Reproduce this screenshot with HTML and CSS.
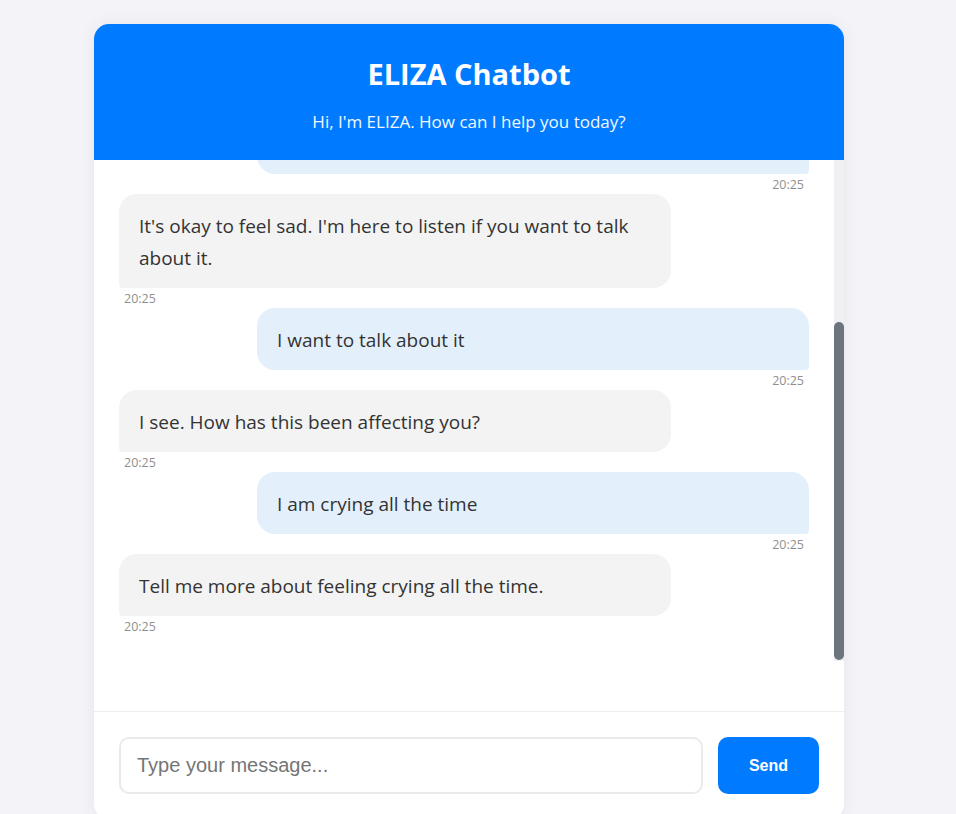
FILE: index.html
```html
<!DOCTYPE html>
<html lang="en">
<head>
<meta charset="utf-8">
<title>ELIZA Chatbot</title>
<link rel="stylesheet" href="styles.css">
</head>
<body>
<div class="chat">
  <header class="chat-header">
    <h1>ELIZA Chatbot</h1>
    <p>Hi, I'm ELIZA. How can I help you today?</p>
  </header>
  <div class="messages-wrap">
    <div class="messages">
      <div class="messages-inner">
        <div class="msg bot">
          <div class="bubble">Hello! How are you feeling today?</div>
          <div class="time">20:24</div>
        </div>
        <div class="msg user">
          <div class="bubble">Hi</div>
          <div class="time">20:24</div>
        </div>
        <div class="msg bot">
          <div class="bubble">How do you feel right now?</div>
          <div class="time">20:25</div>
        </div>
        <div class="msg user">
          <div class="bubble">I feel sad</div>
          <div class="time">20:25</div>
        </div>
        <div class="msg bot">
          <div class="bubble">It's okay to feel sad. I'm here to listen if you want to talk about it.</div>
          <div class="time">20:25</div>
        </div>
        <div class="msg user">
          <div class="bubble">I want to talk about it</div>
          <div class="time">20:25</div>
        </div>
        <div class="msg bot">
          <div class="bubble">I see. How has this been affecting you?</div>
          <div class="time">20:25</div>
        </div>
        <div class="msg user">
          <div class="bubble">I am crying all the time</div>
          <div class="time">20:25</div>
        </div>
        <div class="msg bot">
          <div class="bubble">Tell me more about feeling crying all the time.</div>
          <div class="time">20:25</div>
        </div>
      </div>
    </div>
    <div class="scrollbar"><div class="scrollbar-thumb"></div></div>
  </div>
  <div class="typing"></div>
  <form class="composer">
    <input class="composer-input" type="text" placeholder="Type your message...">
    <button class="composer-send" type="button">Send</button>
  </form>
</div>
</body>
</html>
```

FILE: styles.css
```css
html {
  overflow: hidden;
}
body {
  margin: 0;
  padding: 24px 18px 0 0;
  background: #f4f4f8;
  font-family: "Open Sans", "Noto Sans", sans-serif;
  color: #333;
}
.chat {
  width: 750px;
  margin: 0 auto;
  background: #fff;
  border-radius: 15px;
  overflow: hidden;
  box-shadow: 0 0 18px rgba(0, 0, 0, 0.06);
}
.chat-header {
  background: #007bff;
  color: #fff;
  text-align: center;
  padding: 33px 20px 27px;
}
.chat-header h1 {
  margin: 0 0 20px;
  font-size: 29px;
  line-height: 34px;
  font-weight: 700;
}
.chat-header p {
  margin: 0;
  font-size: 17px;
  line-height: 22px;
  opacity: 0.95;
}
.messages-wrap {
  display: flex;
  height: 501px;
}
.messages {
  flex: 1;
  min-width: 0;
  overflow-y: auto;
  scrollbar-width: none;
  display: flex;
  flex-direction: column-reverse;
}
.messages::-webkit-scrollbar {
  display: none;
}
.scrollbar {
  width: 10px;
  flex: none;
  background: #f0f0f2;
}
.scrollbar-thumb {
  margin-top: 162px;
  height: 338px;
  border-radius: 5px;
  background: #6c757d;
}
.messages-inner {
  padding: 25px;
  display: flex;
  flex-direction: column;
}
.msg {
  display: flex;
  flex-direction: column;
  margin-bottom: 2px;
}
.msg.user {
  align-items: flex-end;
}
.msg.bot {
  align-items: flex-start;
}
.bubble {
  width: 80%;
  box-sizing: border-box;
  padding: 16px 20px 14px;
  font-size: 19px;
  line-height: 32px;
  border-radius: 18px;
}
.msg.bot .bubble {
  background: #f3f3f3;
  border-bottom-left-radius: 4px;
}
.msg.user .bubble {
  background: #e3f0fc;
  border-bottom-right-radius: 4px;
}
.time {
  margin-top: 4px;
  padding: 0 5px;
  font-size: 12.5px;
  line-height: 14px;
  color: #8f8f8f;
}
.typing {
  height: 50px;
}
.composer {
  display: flex;
  gap: 15px;
  padding: 25px;
  border-top: 1px solid #eee;
  margin: 0;
}
.composer-input {
  flex: 1;
  height: 57px;
  box-sizing: border-box;
  border: 2px solid #eaeaea;
  border-radius: 10px;
  padding: 0 16px;
  font-family: "Liberation Sans", Arial, sans-serif;
  font-size: 20px;
  color: #333;
  outline: none;
}
.composer-input::placeholder {
  color: #757575;
}
.composer-send {
  width: 101px;
  height: 57px;
  border: none;
  border-radius: 10px;
  background: #007bff;
  color: #fff;
  font-family: "Liberation Sans", Arial, sans-serif;
  font-size: 16px;
  font-weight: 700;
}
```
